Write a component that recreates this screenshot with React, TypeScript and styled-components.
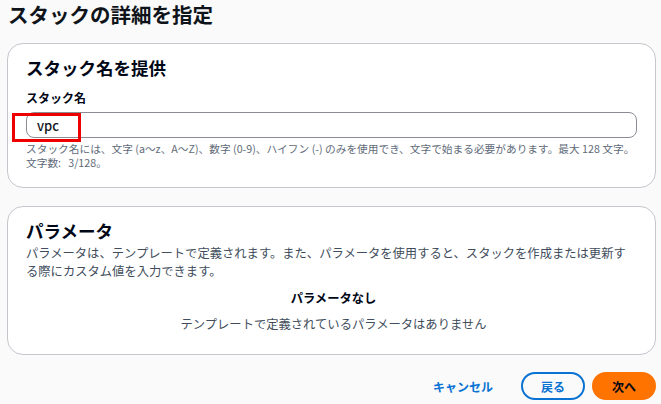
import React from "react";
import styled, { createGlobalStyle } from "styled-components";

const Global = createGlobalStyle`
  html, body { margin: 0; padding: 0; background: #fafafa; }
  body { font-family: "Noto Sans CJK JP", "Noto Sans", sans-serif; color: #000716; }
  * { box-sizing: border-box; }
`;

const Page = styled.div`
  width: 661px;
  padding: 0 5px 0 7px;
  display: flex;
  flex-direction: column;
`;

const Title = styled.h1`
  margin: 0 0 15px 1px;
  font-size: 20.5px;
  line-height: 28px;
  font-weight: 700;
  color: #0f141a;
`;

const Card = styled.section<{ $bottom: number }>`
  background: #fff;
  border: 1px solid #c6c6cd;
  border-radius: 16px;
  padding: 13px 14px ${(p) => p.$bottom}px 18px;
  display: flex;
  flex-direction: column;
  & + & { margin-top: 18px; }
`;

const CardHeading = styled.h2`
  margin: 0;
  font-size: 17.5px;
  line-height: 22px;
  font-weight: 700;
  color: #000716;
`;

const Label = styled.label`
  margin-top: 10px;
  font-size: 12px;
  line-height: 18px;
  font-weight: 700;
  color: #000716;
`;

const InputWrap = styled.div`
  position: relative;
  margin-top: 5px;
  margin-right: 4px;
`;

const Input = styled.div`
  height: 26px;
  border: 1px solid #8c8c94;
  border-radius: 8px;
  padding: 0 10px;
  display: flex;
  align-items: center;
  font-size: 13px;
  font-weight: 500;
  color: #0f141a;
`;

const Highlight = styled.div`
  position: absolute;
  left: -14px;
  top: 1px;
  width: 69px;
  height: 29px;
  border: 3px solid #ee0000;
  pointer-events: none;
`;

const Help = styled.div`
  margin-top: 4px;
  font-size: 10.7px;
  line-height: 14px;
  color: #5f6b7a;
  white-space: nowrap;
`;

const Desc = styled.p`
  margin: 2px 0 0;
  width: 604px;
  font-size: 12.3px;
  line-height: 18px;
  color: #414d5c;
`;

const Empty = styled.div`
  margin-top: 9px;
  display: flex;
  flex-direction: column;
  align-items: center;
  gap: 8px;
  font-size: 12.3px;
  line-height: 18px;
`;

const EmptyTitle = styled.div`
  font-weight: 700;
  color: #000716;
`;

const EmptyText = styled.div`
  color: #414d5c;
`;

const Actions = styled.div`
  margin-top: 17px;
  display: flex;
  justify-content: flex-end;
  align-items: center;
  gap: 7px;
`;

const Button = styled.button<{ $variant: "link" | "normal" | "primary" }>`
  height: 28px;
  border-radius: 20px;
  font-family: inherit;
  font-size: 12px;
  font-weight: 700;
  padding: 0 ${(p) => (p.$variant === "link" ? "12px" : "18px")};
  min-width: ${(p) => (p.$variant === "link" ? "0" : "64px")};
  cursor: pointer;
  border: 2px solid
    ${(p) =>
      p.$variant === "normal"
        ? "#0972d3"
        : p.$variant === "primary"
        ? "#ff7300"
        : "transparent"};
  background: ${(p) => (p.$variant === "primary" ? "#ff7300" : "transparent")};
  color: ${(p) => (p.$variant === "primary" ? "#000716" : "#0972d3")};
  margin-right: ${(p) => (p.$variant === "link" ? "7px" : "0")};
`;

export default function App() {
  return (
    <>
      <Global />
      <Page>
        <Title>スタックの詳細を指定</Title>
        <Card $bottom={17}>
          <CardHeading>スタック名を提供</CardHeading>
          <Label>スタック名</Label>
          <InputWrap>
            <Input>vpc</Input>
            <Highlight />
          </InputWrap>
          <Help>
            スタック名には、文字 (a〜z、A〜Z)、数字 (0-9)、ハイフン (-) のみを使用でき、文字で始まる必要があります。最大 128 文字。
            <br />
            文字数:&nbsp;&nbsp; 3/128。
          </Help>
        </Card>
        <Card $bottom={21}>
          <CardHeading>パラメータ</CardHeading>
          <Desc>
            パラメータは、テンプレートで定義されます。また、パラメータを使用すると、スタックを作成または更新する際にカスタム値を入力できます。
          </Desc>
          <Empty>
            <EmptyTitle>パラメータなし</EmptyTitle>
            <EmptyText>テンプレートで定義されているパラメータはありません</EmptyText>
          </Empty>
        </Card>
        <Actions>
          <Button $variant="link">キャンセル</Button>
          <Button $variant="normal">戻る</Button>
          <Button $variant="primary">次へ</Button>
        </Actions>
      </Page>
    </>
  );
}
